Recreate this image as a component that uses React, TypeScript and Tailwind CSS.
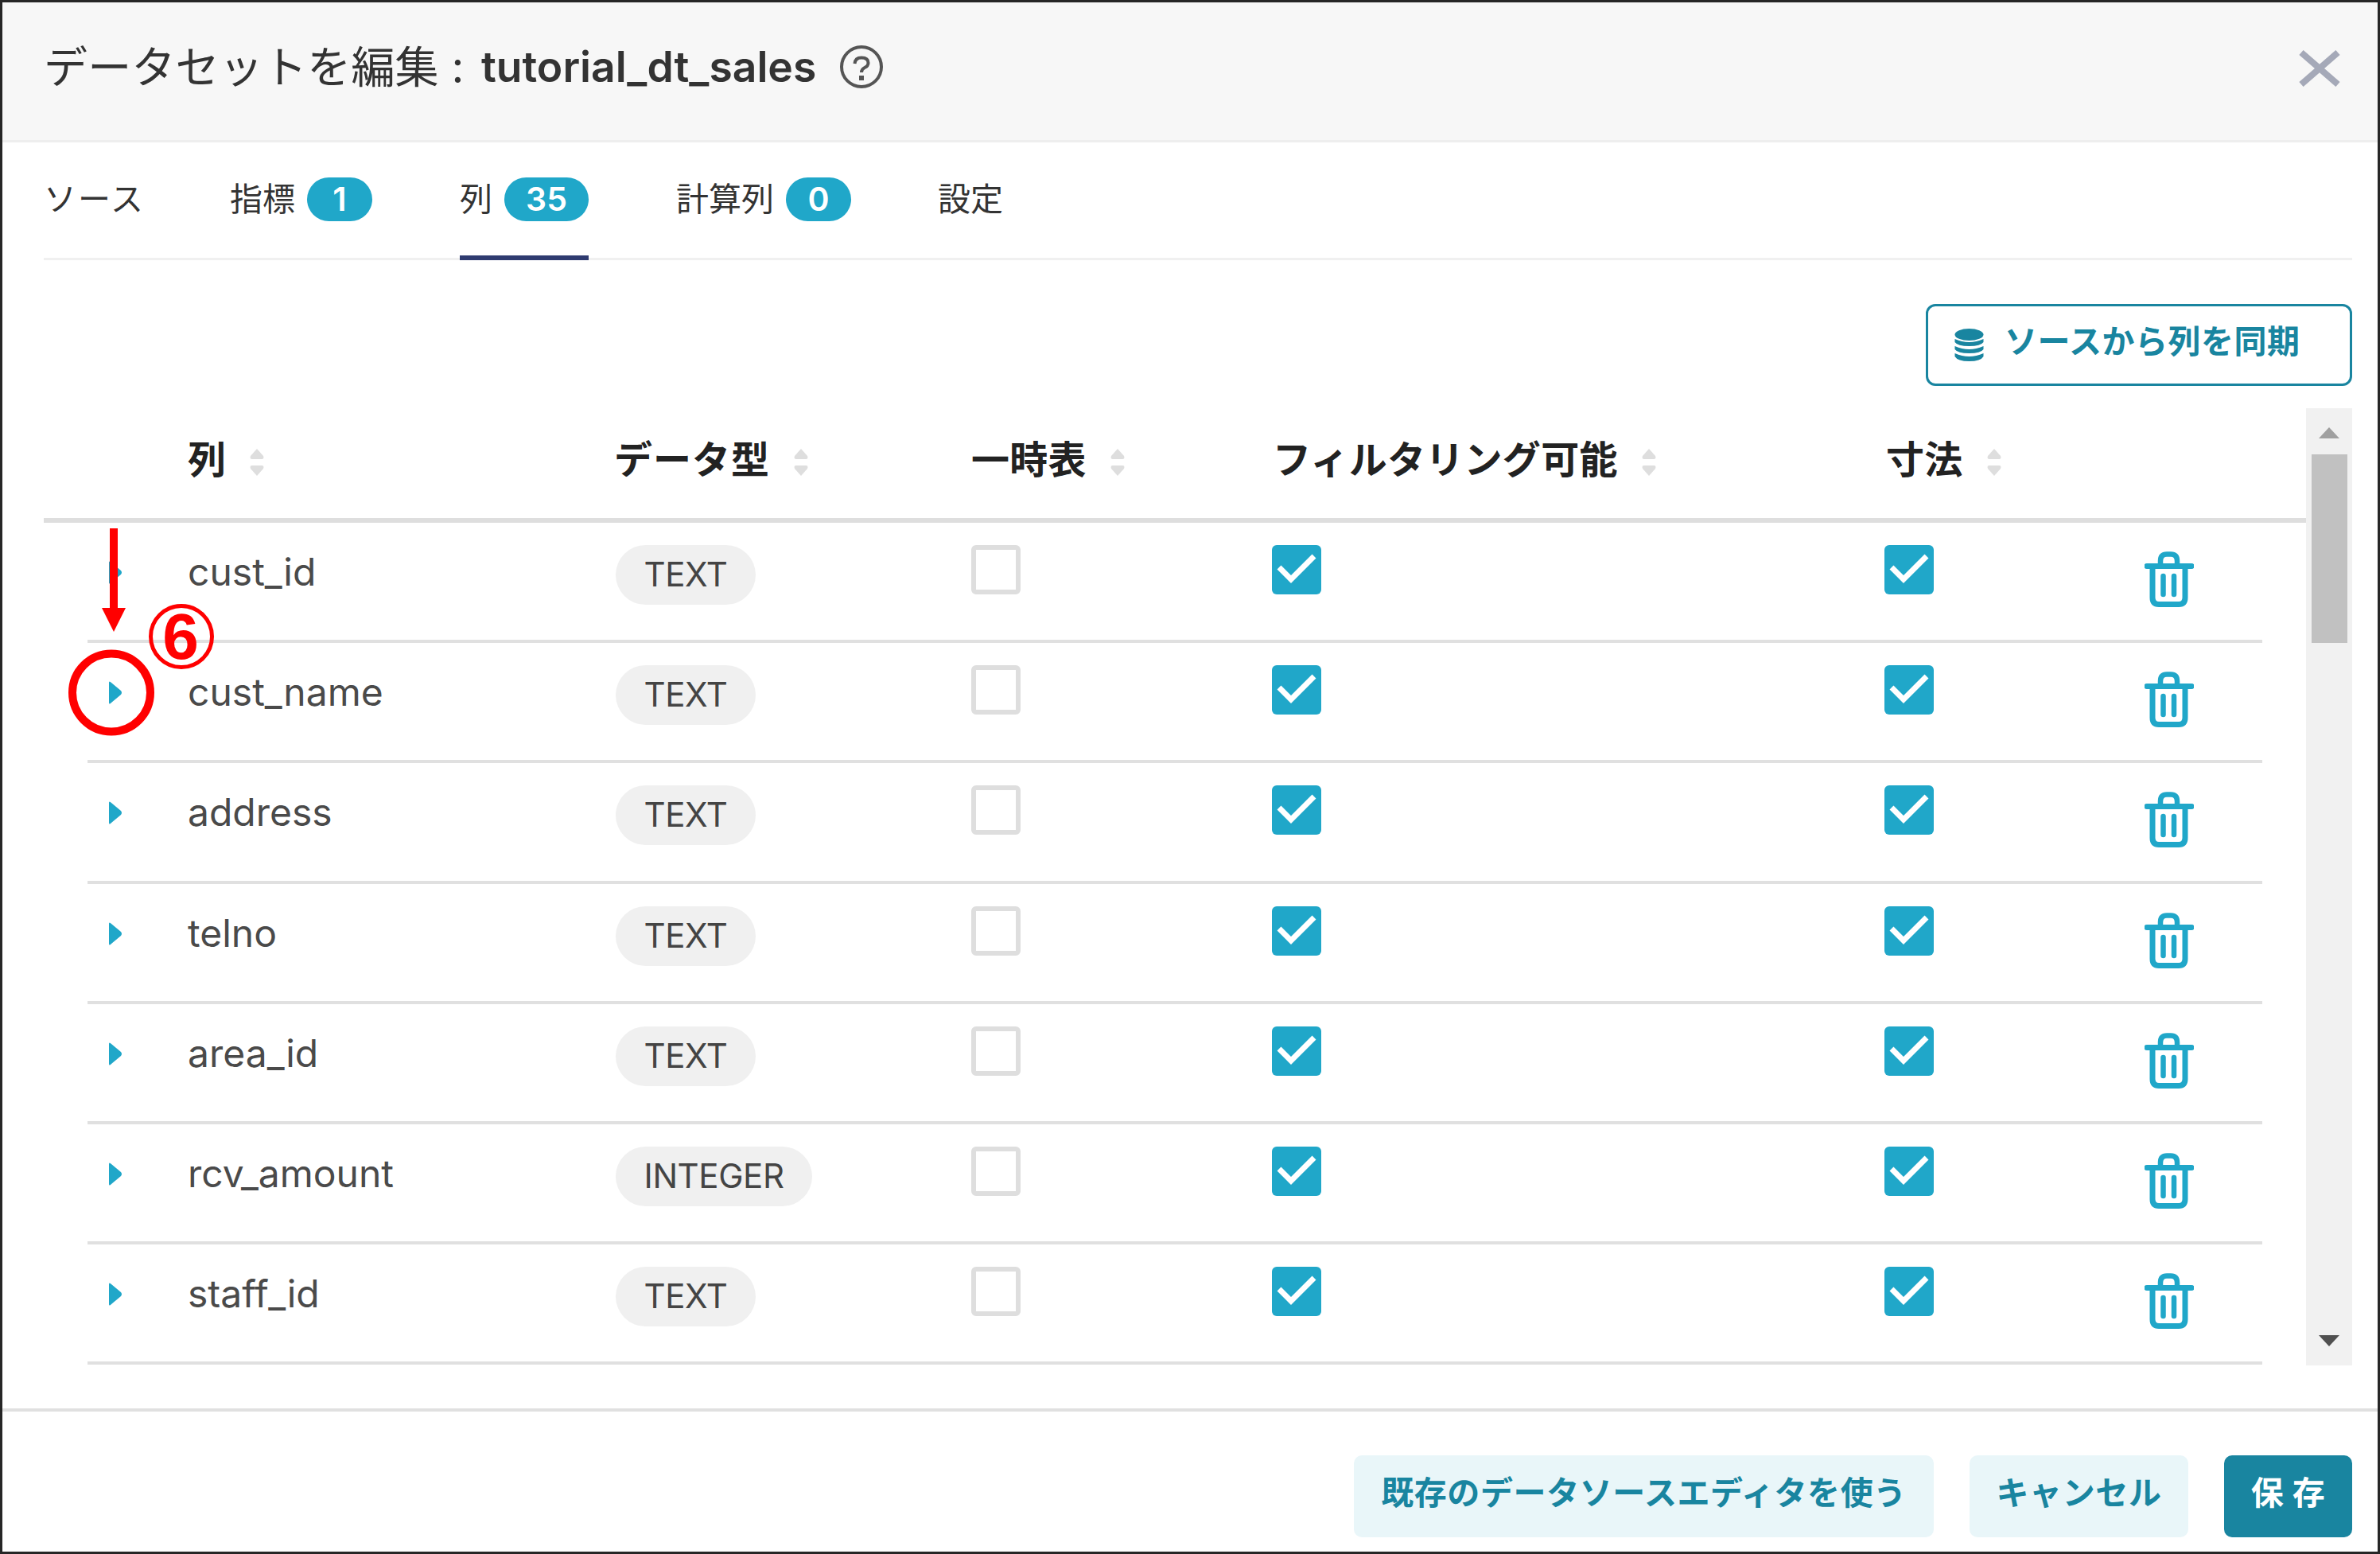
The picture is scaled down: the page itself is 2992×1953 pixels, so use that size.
import React from 'react';

const JP = "font-['Inter','Noto_Sans_CJK_JP',sans-serif]";

interface Column {
  name: string;
  type: string;
}

const columns: Column[] = [
  { name: 'cust_id', type: 'TEXT' },
  { name: 'cust_name', type: 'TEXT' },
  { name: 'address', type: 'TEXT' },
  { name: 'telno', type: 'TEXT' },
  { name: 'area_id', type: 'TEXT' },
  { name: 'rcv_amount', type: 'INTEGER' },
  { name: 'staff_id', type: 'TEXT' },
];

const tabs = [
  { label: 'ソース', box: 'w-[234px] tracking-[2px]' },
  { label: '指標', count: 1, box: 'w-[289px]', badge: 'w-[82px]' },
  { label: '列', count: 35, box: 'w-[272px]', badge: 'w-[106px]', active: true },
  { label: '計算列', count: 0, box: 'w-[329px]', badge: 'w-[82px]' },
  { label: '設定', box: 'w-[90px]' },
];

const headers = [
  { label: '列', box: 'w-[536px]' },
  { label: 'データ型', box: 'w-[449px] tracking-[1px]' },
  { label: '一時表', box: 'w-[379px]' },
  { label: 'フィルタリング可能', box: 'w-[771px]' },
  { label: '寸法', box: 'w-[300px]' },
];

function Sorter() {
  return (
    <svg className="ml-[29px] mt-[5px] h-[34px] w-[20px]" viewBox="0 0 20 34" fill="#dedede">
      <path d="M10 0 L18 9 Q19.500 13 16 13 H4 Q0.500 13 2 9 Z" />
      <path d="M10 34 L18 25 Q19.500 21 16 21 H4 Q0.500 21 2 25 Z" />
    </svg>
  );
}

function Checkbox({ checked = false }: { checked?: boolean }) {
  if (!checked) {
    return <div className="h-[62px] w-[62px] rounded-[6px] border-[6px] border-[#dedede] bg-white" />;
  }
  return (
    <div className="h-[62px] w-[62px] rounded-[6px] bg-[#20a7c9]">
      <svg viewBox="0 0 62 62" fill="none" stroke="#fff" strokeWidth="7">
        <path d="M9 28 L24 43 L53 14" />
      </svg>
    </div>
  );
}

function TrashIcon() {
  return (
    <svg className="h-[72px] w-[62px]" viewBox="0 0 62 72" fill="none" stroke="#20a7c9" strokeWidth="6.5">
      <path d="M3 18.500 H59" strokeWidth="7" strokeLinecap="round" />
      <path d="M20 18 V12 Q20 3.500 28 3.500 H33 Q41 3.500 41 12 V18" />
      <path d="M10 20 V58 Q10 66.500 18 66.500 H43 Q51 66.500 51 58 V20" strokeWidth="7" />
      <path d="M23.500 31 V54 M37 31 V54" strokeLinecap="round" />
    </svg>
  );
}

function Row({ column }: { column: Column }) {
  return (
    <div className="flex h-[151.200px] border-b-[4px] border-[#e0e0e0]">
      <div className="w-[126px] pl-[27px] pt-[48px]">
        <svg className="h-[29px] w-[17px]" viewBox="0 0 17 29" fill="#20a7c9">
          <path d="M0 2 Q0 -1 3 2 L15 12 Q17 14.500 15 17 L3 27 Q0 30 0 27 Z" />
        </svg>
      </div>
      <div className="w-[538px] pt-[32px] text-[48px] leading-[60px] text-[#4a4a4a]">
        {column.name}
      </div>
      <div className="w-[447px] pt-[28px]">
        <span className="inline-flex h-[75px] items-center rounded-full bg-[#f0f0f0] px-[35.500px] pb-[2px] text-[42px] tracking-[-0.400px] text-[#444]">
          {column.type}
        </span>
      </div>
      <div className="w-[378px] pt-[28px]">
        <Checkbox />
      </div>
      <div className="w-[770px] pt-[28px]">
        <Checkbox checked />
      </div>
      <div className="w-[327px] pt-[28px]">
        <Checkbox checked />
      </div>
      <div className="pt-[36px]">
        <TrashIcon />
      </div>
    </div>
  );
}

export default function App() {
  return (
    <div className={`${JP} relative flex h-[1953px] w-[2992px] flex-col border-[3px] border-[#262626] bg-white whitespace-nowrap`}>
      {/* Title bar */}
      <header className="flex h-[176px] shrink-0 items-start justify-between border-b-[3px] border-[#eee] bg-[#f7f7f7] pl-[52px] pr-[47px] pt-[46px]">
        <div className="flex items-center text-[53.400px] leading-[70px] text-[#333]">
          <span className="w-[550px] text-[55px] tracking-[0.200px]">データセットを編集 :</span>
          <span className="font-semibold">tutorial_dt_sales</span>
          <svg className="ml-[29px] h-[56px] w-[56px]" viewBox="0 0 56 56" fill="none" stroke="#555" strokeWidth="4">
            <circle cx="28" cy="28" r="25" />
            <path d="M19.500 24 Q20 16.500 28 16.500 Q36.500 16.500 36.500 23 Q36.500 27 32 29 Q28 31 28 35" />
            <path d="M28 39 V45" strokeWidth="6" />
          </svg>
        </div>
        <svg className="mt-[14px] h-[46px] w-[52px]" viewBox="0 0 52 46" fill="none" stroke="#a5a9b8" strokeWidth="8">
          <path d="M3 3 L49 43 M49 3 L3 43" />
        </svg>
      </header>

      <main className="flex h-[1591px] shrink-0 flex-col pl-[52px] pr-[32px]">
        {/* Tabs */}
        <nav className="flex h-[148px] shrink-0 border-b-[3px] border-[#f0f0f0] text-[41px] text-[#333]">
          {tabs.map((tab) => (
            <div key={tab.label} className={tab.box}>
              <div className={`inline-flex h-[148px] items-start pt-[44px] ${tab.active ? 'border-b-[6px] border-[#2f3b70]' : ''}`}>
                <span className="leading-[54px]">{tab.label}</span>
                {tab.badge && (
                  <span className={`${tab.badge} ml-[15px] flex h-[55px] items-center justify-center rounded-full bg-[#20a7c9] font-semibold text-white`}>
                    {tab.count}
                  </span>
                )}
              </div>
            </div>
          ))}
        </nav>

        {/* Sync action */}
        <div className="flex h-[186px] shrink-0 justify-end pt-[55px]">
          <button className="flex h-[103px] w-[536px] items-center rounded-[12px] border-[3px] border-[#1985a0] pl-[33px] text-[41px] font-bold tracking-[0.500px] text-[#1985a0]">
            <svg className="mr-[26px] h-[41px] w-[37px]" viewBox="0 0 37 41" fill="#1985a0">
              <ellipse cx="18.5" cy="7.5" rx="18" ry="7.5" />
              <path d="M0.500 13 Q18.500 21 36.500 13 V17 Q33 22 18.500 22 Q4 22 0.500 17 Z" />
              <path d="M0.500 22 Q18.500 30 36.500 22 V26 Q33 31 18.500 31 Q4 31 0.500 26 Z" />
              <path d="M0.500 31 Q18.500 39 36.500 31 V35 Q33 41 18.500 41 Q4 41 0.500 35 Z" />
            </svg>
            <span className="pb-[7px]">ソースから列を同期</span>
          </button>
        </div>

        {/* Table */}
        <div className="flex h-[1203px] shrink-0">
          <div className="w-[2844px]">
            <div className="flex h-[144px] border-b-[6px] border-[#dedede] pl-[181px] pt-[32px] text-[48px] leading-[66px] font-bold tracking-[0.300px] text-[#222]">
              {headers.map((header) => (
                <div key={header.label} className={`${header.box} flex h-[66px] items-center`}>
                  {header.label}
                  <Sorter />
                </div>
              ))}
            </div>
            <div className="mx-[55px]">
              {columns.map((column) => (
                <Row key={column.name} column={column} />
              ))}
            </div>
          </div>
          <div className="flex w-[58px] flex-col items-center justify-between bg-[#f1f1f1] pt-[24px] pb-[24px]">
            <div className="flex flex-col items-center">
              <svg className="h-[14px] w-[26px]" viewBox="0 0 26 14" fill="#a0a0a0">
                <path d="M13 0 L26 14 H0 Z" />
              </svg>
              <div className="mt-[20px] h-[237px] w-[45px] bg-[#c1c1c1]" />
            </div>
            <svg className="h-[14px] w-[26px]" viewBox="0 0 26 14" fill="#505050">
              <path d="M0 0 H26 L13 14 Z" />
            </svg>
          </div>
        </div>
      </main>

      {/* Footer */}
      <footer className="flex flex-1 justify-end gap-[45px] border-t-[4px] border-[#e0e0e0] pr-[32px] pt-[55px] text-[41px] font-bold tracking-[0.600px] text-[#1985a0]">
        <button className="h-[103px] w-[729px] rounded-[10px] bg-[#e9f6f9] pb-[8px]">既存のデータソースエディタを使う</button>
        <button className="h-[103px] w-[275px] rounded-[10px] bg-[#e9f6f9] pb-[8px]">キャンセル</button>
        <button className="h-[103px] w-[161px] rounded-[10px] bg-[#1985a0] pb-[8px] text-white">保 存</button>
      </footer>

      {/* Step annotation */}
      <svg className="absolute left-[77px] top-[657px] h-[280px] w-[200px]" viewBox="80 660 200 280" fill="none" stroke="#f00">
        <path d="M143 664 V766" strokeWidth="10" />
        <path d="M128 764 H158 L143 794 Z" fill="#f00" stroke="none" />
        <circle cx="140" cy="870.5" r="49" strokeWidth="10" />
        <circle cx="228" cy="800" r="38.5" strokeWidth="5" />
      </svg>
      <span className="absolute left-[184px] top-[757px] w-[80px] text-center font-['Liberation_Sans',sans-serif] text-[82px] leading-[80px] font-bold text-[#f00]">6</span>
    </div>
  );
}
